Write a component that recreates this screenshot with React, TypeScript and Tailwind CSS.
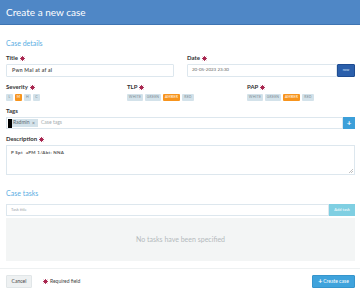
import React from "react";

const Star = () => (
  <svg width="5" height="5" viewBox="0 0 12 12" className="inline-block ml-[2px] align-[-0.5px]">
    <g stroke="#a8264f" strokeWidth="2.4" strokeLinecap="round">
      <line x1="6" y1="1.2" x2="6" y2="10.8" />
      <line x1="1.2" y1="6" x2="10.8" y2="6" />
      <line x1="2.6" y1="2.6" x2="9.4" y2="9.4" />
      <line x1="9.4" y1="2.6" x2="2.6" y2="9.4" />
    </g>
  </svg>
);

const Label = ({ children, req = true }: { children: React.ReactNode; req?: boolean }) => (
  <div className="h-[8px] leading-[8px] text-[6px] font-bold text-[#333] flex items-center">
    {children}
    {req && <Star />}
  </div>
);

const Pill = ({ t, active = false, w }: { t: string; active?: boolean; w: string }) => (
  <div
    className={`h-[7px] ${w} flex items-center justify-center text-[3.5px] tracking-[0.2px] rounded-[1px] ${
      active ? "bg-[#f7941d] text-white" : "bg-[#d3e2ea] text-[#7d8c95]"
    }`}
  >
    {t}
  </div>
);

export default function App() {
  return (
    <div
      className="w-[360px] h-[294px] overflow-hidden bg-white"
      style={{ fontFamily: "Lato, 'Noto Sans', sans-serif" }}
    >
      <div className="h-[25px] bg-[#4f87c6] border-b border-[#3e74b2] flex items-center pl-[6px]">
        <span className="text-white text-[10px] leading-none">Create a new case</span>
      </div>
      <div className="px-[6px] w-[361px]">
        <div className="mt-[13px] h-[10px] leading-[10px] text-[7px] text-[#5aaee3]">Case details</div>

        <div className="flex mt-[6px]">
          <div className="w-[181px]">
            <Label>Title</Label>
            <div className="mt-[2px] w-[168px] h-[13px] border border-[#dde7ee] rounded-[1px] flex items-center pl-[5px] text-[5px] font-bold text-[#555] tracking-[0.3px]">
              Pwn Mal at af al
            </div>
          </div>
          <div className="w-[168px]">
            <Label>Date</Label>
            <div className="mt-[2px] flex h-[13px]">
              <div className="w-[150px] border border-[#dde7ee] rounded-[1px] flex items-center pl-[4px] text-[4.5px] text-[#666]">
                20-05-2023 23:30
              </div>
              <div className="w-[18px] bg-[#2b5fab] border border-[#1f4d92] rounded-[1px] flex items-center justify-center text-[3.5px] text-[#cfe0f5]">
                now
              </div>
            </div>
          </div>
        </div>

        <div className="flex mt-[6px]">
          <div className="w-[121px]">
            <Label>Severity</Label>
            <div className="mt-[3px] flex gap-[2px]">
              <Pill t="L" w="w-[7px]" />
              <Pill t="M" w="w-[7px]" active />
              <Pill t="H" w="w-[7px]" />
              <Pill t="C" w="w-[7px]" />
            </div>
          </div>
          <div className="w-[120px]">
            <Label>TLP</Label>
            <div className="mt-[3px] flex gap-[2px]">
              <Pill t="WHITE" w="w-[16px]" />
              <Pill t="GREEN" w="w-[16px]" />
              <Pill t="AMBER" w="w-[17px]" active />
              <Pill t="RED" w="w-[12px]" />
            </div>
          </div>
          <div className="flex-1">
            <Label>PAP</Label>
            <div className="mt-[3px] flex gap-[2px]">
              <Pill t="WHITE" w="w-[16px]" />
              <Pill t="GREEN" w="w-[16px]" />
              <Pill t="AMBER" w="w-[17px]" active />
              <Pill t="RED" w="w-[12px]" />
            </div>
          </div>
        </div>

        <div className="mt-[6px]">
          <Label req={false}>Tags</Label>
          <div className="mt-[2px] flex h-[12px] w-[349px]">
            <div className="flex-1 border border-[#dde7ee] flex items-center pl-[1px]">
              <div className="w-[4px] h-[9px] bg-black" />
              <div className="h-[8px] w-[26px] pl-[1px] bg-[#d3e2ea] flex items-center justify-between pr-[3px] text-[5px] text-[#5d6a72]">
                <span>Radmin</span>
                <span className="text-[5px] leading-none">×</span>
              </div>
              <span className="ml-[3px] text-[5px] text-[#a5acb0]">Case tags</span>
            </div>
            <div className="w-[12px] bg-[#3c9fd9] flex items-center justify-center text-white text-[8px] font-bold leading-none">
              +
            </div>
          </div>
        </div>

        <div className="mt-[6px]">
          <Label>Description</Label>
          <div className="mt-[2px] relative w-[349px] h-[30px] border border-[#dde7ee] pl-[4px] pt-[4px] text-[4.5px] font-bold text-[#555] tracking-[0.3px]">
            P Spt &nbsp;aPM 1/Abt: NNA
            <svg width="4" height="4" viewBox="0 0 4 4" className="absolute right-[1px] bottom-[1px]">
              <line x1="0" y1="4" x2="4" y2="0" stroke="#999" strokeWidth="0.6" />
              <line x1="2" y1="4" x2="4" y2="2" stroke="#999" strokeWidth="0.6" />
            </svg>
          </div>
        </div>

        <div className="mt-[13px] h-[10px] leading-[10px] text-[7px] text-[#5aaee3]">Case tasks</div>

        <div className="mt-[6px] flex h-[12px] w-[349px]">
          <div className="flex-1 border border-[#dde7ee] flex items-center pl-[4px] text-[4px] text-[#9aa3a8]">
            Task title
          </div>
          <div className="w-[26px] bg-[#7fcfe2] flex items-center justify-center text-[4px] text-white">
            Add task
          </div>
        </div>

        <div className="mt-[2px] w-[349px] h-[43px] bg-[#f3f5f5] flex items-center justify-center text-[7px] text-[#b3babd]">
          No tasks have been specified
        </div>
      </div>

      <div className="mt-[7px] border-t border-[#eef1f2]" />

      <div className="mt-[6px] px-[6px] w-[361px] flex items-center">
        <div className="w-[26px] h-[13px] bg-[#eef1f2] border border-[#e1e6e8] rounded-[1px] flex items-center justify-center text-[5px] text-[#444]">
          Cancel
        </div>
        <div className="ml-[9px] flex items-center text-[5px] text-[#444]">
          <Star />
          <span className="ml-[2px]">Required field</span>
        </div>
        <div className="ml-auto w-[43px] h-[13px] bg-[#3fa3dc] border border-[#3695cc] rounded-[1px] flex items-center justify-center text-[5px] text-white gap-[1px]">
          <span className="text-[7px] font-bold leading-none">+</span>
          <span>Create case</span>
        </div>
      </div>
    </div>
  );
}
